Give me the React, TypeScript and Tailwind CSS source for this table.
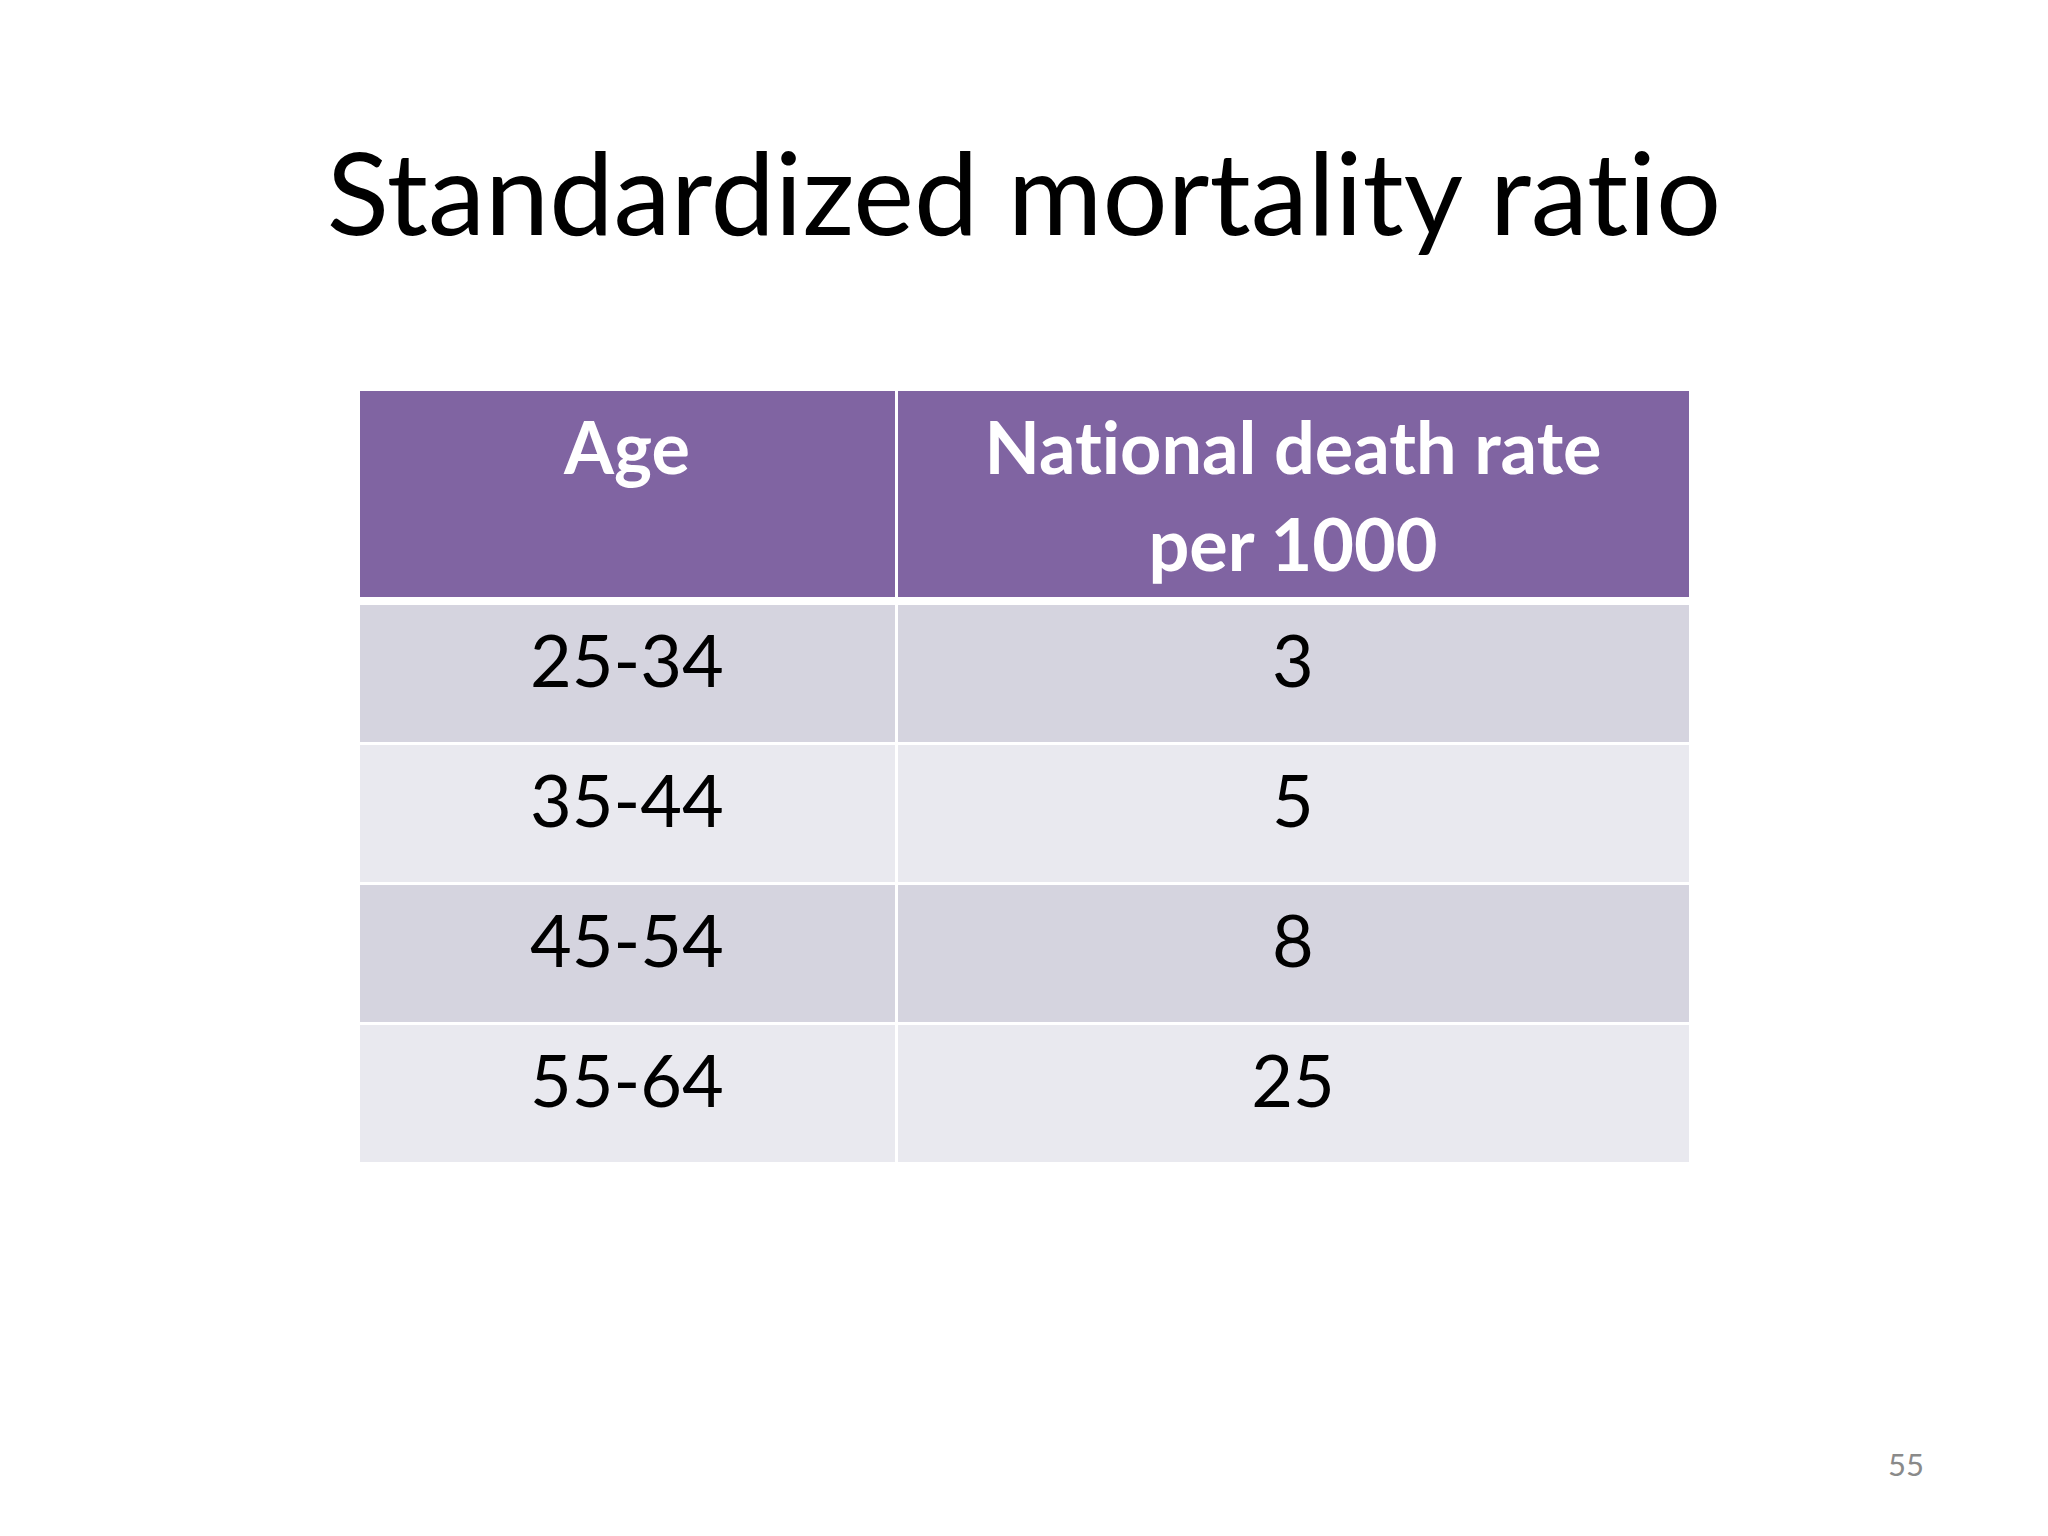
import React from 'react';

const rows = [
  { age: '25-34', rate: '3', shade: 'dark' },
  { age: '35-44', rate: '5', shade: 'light' },
  { age: '45-54', rate: '8', shade: 'dark' },
  { age: '55-64', rate: '25', shade: 'light' },
];

const App: React.FC = () => {
  return (
    <div
      className="w-[2048px] h-[1536px] bg-white flex flex-col text-black [font-variant-ligatures:none]"
      style={{ fontFamily: 'Lato, "Open Sans", sans-serif' }}
    >
      {/* Title */}
      <h1 className="pt-[122px] text-center text-[115px] leading-[136px] font-normal">
        Standardized mortality ratio
      </h1>

      {/* Table */}
      <div className="mt-[133px] w-[1329px] mx-auto flex flex-col">
        <div className="flex gap-[3px] h-[206px]">
          <div className="w-[535px] bg-[#8064a2] text-white font-bold text-[72px] leading-[97px] text-center pt-[7px]">
            Age
          </div>
          <div className="flex-1 bg-[#8064a2] text-white font-bold text-[72px] leading-[97px] text-center pt-[7px]">
            National death rate
            <br />
            per 1000
          </div>
        </div>

        <div className="mt-[8px] flex flex-col gap-[3px]">
          {rows.map((row) => (
            <div key={row.age} className="flex gap-[3px] h-[137px]">
              <div
                className={`w-[535px] text-center text-[72px] leading-[97px] pt-[6px] ${
                  row.shade === 'dark' ? 'bg-[#d5d4df]' : 'bg-[#e9e9ef]'
                }`}
              >
                {row.age}
              </div>
              <div
                className={`flex-1 text-center text-[72px] leading-[97px] pt-[6px] ${
                  row.shade === 'dark' ? 'bg-[#d5d4df]' : 'bg-[#e9e9ef]'
                }`}
              >
                {row.rate}
              </div>
            </div>
          ))}
        </div>
      </div>

      {/* Slide number */}
      <div className="flex-1" />
      <div className="flex justify-end pr-[124px] pb-[53px]">
        <span className="text-[31px] leading-[37px] text-[#8a8a8a]">55</span>
      </div>
    </div>
  );
};

export default App;
